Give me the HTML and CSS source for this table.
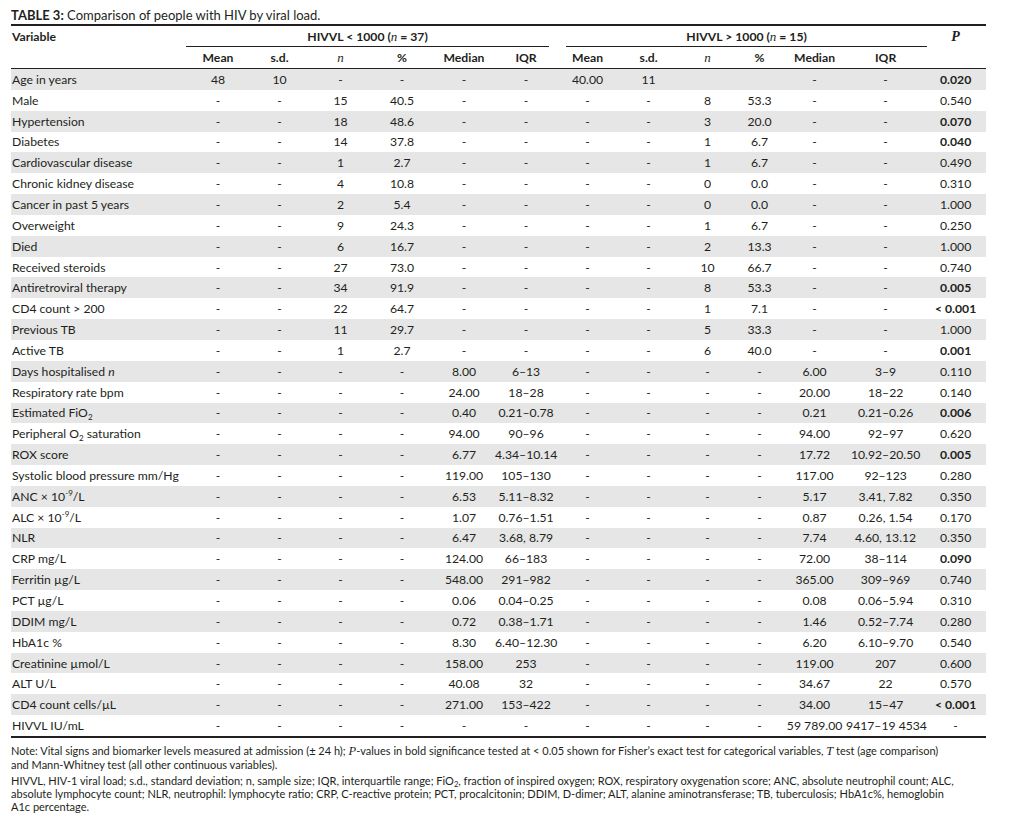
FILE: index.html
```html
<!DOCTYPE html>
<html>
<head>
<meta charset="utf-8">
<link rel="stylesheet" href="styles.css">
</head>
<body>
<div class="page">
  <div class="title"><b>TABLE 3:</b> Comparison of people with HIV by viral load.</div>
  <table class="data">
    <colgroup>
      <col class="c-var"><col class="c62"><col class="c61"><col class="c61"><col class="c62"><col class="c62"><col class="c62"><col class="c61"><col class="c61"><col class="c57"><col class="c47"><col class="c63"><col class="c79"><col class="c61">
    </colgroup>
    <thead>
      <tr>
        <th rowspan="2" class="h-var"><div class="h1">Variable</div></th>
        <th colspan="6" class="grp"><div class="gl gl-a">HIVVL &lt; 1000 (<i class="sn">n</i> = 37)</div></th>
        <th colspan="6" class="grp"><div class="gl gl-b">HIVVL &gt; 1000 (<i class="sn">n</i> = 15)</div></th>
        <th rowspan="2" class="h-p"><div class="h1"><i class="sp">P</i></div></th>
      </tr>
      <tr class="h2">
        <th>Mean</th><th>s.d.</th><th><i class="sn">n</i></th><th>%</th><th>Median</th><th>IQR</th>
        <th>Mean</th><th>s.d.</th><th><i class="sn">n</i></th><th>%</th><th>Median</th><th>IQR</th>
      </tr>
    </thead>
    <tbody>
      <tr><td>Age in years</td><td>48</td><td>10</td><td>-</td><td>-</td><td>-</td><td>-</td><td>40.00</td><td>11</td><td></td><td></td><td>-</td><td>-</td><td class="b">0.020</td></tr>
      <tr><td>Male</td><td>-</td><td>-</td><td>15</td><td>40.5</td><td>-</td><td>-</td><td>-</td><td>-</td><td>8</td><td>53.3</td><td>-</td><td>-</td><td>0.540</td></tr>
      <tr><td>Hypertension</td><td>-</td><td>-</td><td>18</td><td>48.6</td><td>-</td><td>-</td><td>-</td><td>-</td><td>3</td><td>20.0</td><td>-</td><td>-</td><td class="b">0.070</td></tr>
      <tr><td>Diabetes</td><td>-</td><td>-</td><td>14</td><td>37.8</td><td>-</td><td>-</td><td>-</td><td>-</td><td>1</td><td>6.7</td><td>-</td><td>-</td><td class="b">0.040</td></tr>
      <tr><td>Cardiovascular disease</td><td>-</td><td>-</td><td>1</td><td>2.7</td><td>-</td><td>-</td><td>-</td><td>-</td><td>1</td><td>6.7</td><td>-</td><td>-</td><td>0.490</td></tr>
      <tr><td>Chronic kidney disease</td><td>-</td><td>-</td><td>4</td><td>10.8</td><td>-</td><td>-</td><td>-</td><td>-</td><td>0</td><td>0.0</td><td>-</td><td>-</td><td>0.310</td></tr>
      <tr><td>Cancer in past 5 years</td><td>-</td><td>-</td><td>2</td><td>5.4</td><td>-</td><td>-</td><td>-</td><td>-</td><td>0</td><td>0.0</td><td>-</td><td>-</td><td>1.000</td></tr>
      <tr><td>Overweight</td><td>-</td><td>-</td><td>9</td><td>24.3</td><td>-</td><td>-</td><td>-</td><td>-</td><td>1</td><td>6.7</td><td>-</td><td>-</td><td>0.250</td></tr>
      <tr><td>Died</td><td>-</td><td>-</td><td>6</td><td>16.7</td><td>-</td><td>-</td><td>-</td><td>-</td><td>2</td><td>13.3</td><td>-</td><td>-</td><td>1.000</td></tr>
      <tr><td>Received steroids</td><td>-</td><td>-</td><td>27</td><td>73.0</td><td>-</td><td>-</td><td>-</td><td>-</td><td>10</td><td>66.7</td><td>-</td><td>-</td><td>0.740</td></tr>
      <tr><td>Antiretroviral therapy</td><td>-</td><td>-</td><td>34</td><td>91.9</td><td>-</td><td>-</td><td>-</td><td>-</td><td>8</td><td>53.3</td><td>-</td><td>-</td><td class="b">0.005</td></tr>
      <tr><td>CD4 count &gt; 200</td><td>-</td><td>-</td><td>22</td><td>64.7</td><td>-</td><td>-</td><td>-</td><td>-</td><td>1</td><td>7.1</td><td>-</td><td>-</td><td class="b">&lt; 0.001</td></tr>
      <tr><td>Previous TB</td><td>-</td><td>-</td><td>11</td><td>29.7</td><td>-</td><td>-</td><td>-</td><td>-</td><td>5</td><td>33.3</td><td>-</td><td>-</td><td>1.000</td></tr>
      <tr><td>Active TB</td><td>-</td><td>-</td><td>1</td><td>2.7</td><td>-</td><td>-</td><td>-</td><td>-</td><td>6</td><td>40.0</td><td>-</td><td>-</td><td class="b">0.001</td></tr>
      <tr><td>Days hospitalised <i>n</i></td><td>-</td><td>-</td><td>-</td><td>-</td><td>8.00</td><td>6–13</td><td>-</td><td>-</td><td>-</td><td>-</td><td>6.00</td><td>3–9</td><td>0.110</td></tr>
      <tr><td>Respiratory rate bpm</td><td>-</td><td>-</td><td>-</td><td>-</td><td>24.00</td><td>18–28</td><td>-</td><td>-</td><td>-</td><td>-</td><td>20.00</td><td>18–22</td><td>0.140</td></tr>
      <tr><td>Estimated FiO<sub>2</sub></td><td>-</td><td>-</td><td>-</td><td>-</td><td>0.40</td><td>0.21–0.78</td><td>-</td><td>-</td><td>-</td><td>-</td><td>0.21</td><td>0.21–0.26</td><td class="b">0.006</td></tr>
      <tr><td>Peripheral O<sub>2</sub> saturation</td><td>-</td><td>-</td><td>-</td><td>-</td><td>94.00</td><td>90–96</td><td>-</td><td>-</td><td>-</td><td>-</td><td>94.00</td><td>92–97</td><td>0.620</td></tr>
      <tr><td>ROX score</td><td>-</td><td>-</td><td>-</td><td>-</td><td>6.77</td><td>4.34–10.14</td><td>-</td><td>-</td><td>-</td><td>-</td><td>17.72</td><td>10.92–20.50</td><td class="b">0.005</td></tr>
      <tr><td>Systolic blood pressure mm/Hg</td><td>-</td><td>-</td><td>-</td><td>-</td><td>119.00</td><td>105–130</td><td>-</td><td>-</td><td>-</td><td>-</td><td>117.00</td><td>92–123</td><td>0.280</td></tr>
      <tr><td>ANC × 10<sup>-9</sup>/L</td><td>-</td><td>-</td><td>-</td><td>-</td><td>6.53</td><td>5.11–8.32</td><td>-</td><td>-</td><td>-</td><td>-</td><td>5.17</td><td>3.41, 7.82</td><td>0.350</td></tr>
      <tr><td>ALC × 10<sup>-9</sup>/L</td><td>-</td><td>-</td><td>-</td><td>-</td><td>1.07</td><td>0.76–1.51</td><td>-</td><td>-</td><td>-</td><td>-</td><td>0.87</td><td>0.26, 1.54</td><td>0.170</td></tr>
      <tr><td>NLR</td><td>-</td><td>-</td><td>-</td><td>-</td><td>6.47</td><td>3.68, 8.79</td><td>-</td><td>-</td><td>-</td><td>-</td><td>7.74</td><td>4.60, 13.12</td><td>0.350</td></tr>
      <tr><td>CRP mg/L</td><td>-</td><td>-</td><td>-</td><td>-</td><td>124.00</td><td>66–183</td><td>-</td><td>-</td><td>-</td><td>-</td><td>72.00</td><td>38–114</td><td class="b">0.090</td></tr>
      <tr><td>Ferritin µg/L</td><td>-</td><td>-</td><td>-</td><td>-</td><td>548.00</td><td>291–982</td><td>-</td><td>-</td><td>-</td><td>-</td><td>365.00</td><td>309–969</td><td>0.740</td></tr>
      <tr><td>PCT µg/L</td><td>-</td><td>-</td><td>-</td><td>-</td><td>0.06</td><td>0.04–0.25</td><td>-</td><td>-</td><td>-</td><td>-</td><td>0.08</td><td>0.06–5.94</td><td>0.310</td></tr>
      <tr><td>DDIM mg/L</td><td>-</td><td>-</td><td>-</td><td>-</td><td>0.72</td><td>0.38–1.71</td><td>-</td><td>-</td><td>-</td><td>-</td><td>1.46</td><td>0.52–7.74</td><td>0.280</td></tr>
      <tr><td>HbA1c %</td><td>-</td><td>-</td><td>-</td><td>-</td><td>8.30</td><td>6.40–12.30</td><td>-</td><td>-</td><td>-</td><td>-</td><td>6.20</td><td>6.10–9.70</td><td>0.540</td></tr>
      <tr><td>Creatinine µmol/L</td><td>-</td><td>-</td><td>-</td><td>-</td><td>158.00</td><td>253</td><td>-</td><td>-</td><td>-</td><td>-</td><td>119.00</td><td>207</td><td>0.600</td></tr>
      <tr><td>ALT U/L</td><td>-</td><td>-</td><td>-</td><td>-</td><td>40.08</td><td>32</td><td>-</td><td>-</td><td>-</td><td>-</td><td>34.67</td><td>22</td><td>0.570</td></tr>
      <tr><td>CD4 count cells/µL</td><td>-</td><td>-</td><td>-</td><td>-</td><td>271.00</td><td>153–422</td><td>-</td><td>-</td><td>-</td><td>-</td><td>34.00</td><td>15–47</td><td class="b">&lt; 0.001</td></tr>
      <tr><td>HIVVL IU/mL</td><td>-</td><td>-</td><td>-</td><td>-</td><td>-</td><td>-</td><td>-</td><td>-</td><td>-</td><td>-</td><td>59 789.00</td><td>9417–19 4534</td><td>-</td></tr>
    </tbody>
  </table>
  <p class="note">Note: Vital signs and biomarker levels measured at admission (± 24 h); <i class="sp2">P</i>-values in bold significance tested at &lt; 0.05 shown for Fisher’s exact test for categorical variables, <i class="sp2">T</i> test (age comparison)<br>and Mann-Whitney test (all other continuous variables).</p>
  <p class="note">HIVVL, HIV-1 viral load; s.d., standard deviation; n, sample size; IQR, interquartile range; FiO<sub class="nsub">2</sub>, fraction of inspired oxygen; ROX, respiratory oxygenation score; ANC, absolute neutrophil count; ALC,<br>absolute lymphocyte count; NLR, neutrophil: lymphocyte ratio; CRP, C-reactive protein; PCT, procalcitonin; DDIM, D-dimer; ALT, alanine aminotransferase; TB, tuberculosis; HbA1c%, hemoglobin<br>A1c percentage.</p>
</div>
</body>
</html>
```

FILE: styles.css
```css
body {
  margin: 0;
  background: #ffffff;
  color: #231f20;
  font-family: Lato, "Liberation Sans", sans-serif;
}

.page {
  width: 975px;
  padding-left: 11px;
}

.title {
  padding-top: 6px;
  height: 18px;
  line-height: 18px;
  font-size: 13px;
  white-space: nowrap;
}

.data {
  width: 975px;
  table-layout: fixed;
  border-collapse: separate;
  border-spacing: 0;
  border-top: 2px solid #231f20;
  border-bottom: 2px solid #231f20;
  font-size: 12.2px;
}

.c-var { width: 176px; }
.c62 { width: 62px; }
.c61 { width: 61px; }
.c57 { width: 57px; }
.c47 { width: 47px; }
.c63 { width: 63px; }
.c79 { width: 79px; }

.data th {
  padding: 0;
  font-weight: 700;
  text-align: center;
  vertical-align: top;
}

.data th.h-var {
  text-align: left;
  padding-left: 1px;
  border-bottom: 1px solid #231f20;
}

.data th.h-p {
  border-bottom: 1px solid #231f20;
}

.h1 {
  height: 21px;
  line-height: 22px;
}

.gl {
  height: 20px;
  line-height: 22px;
  border-bottom: 1px solid #231f20;
  white-space: nowrap;
}

.gl-a { margin: 0 8px 0 -1px; }
.gl-b { margin: 0 -2px 0 9px; }

.h2 th {
  height: 20px;
  padding-top: 1px;
  line-height: 20px;
  vertical-align: middle;
  border-bottom: 1px solid #231f20;
}

.sn {
  font-family: "Liberation Serif", serif;
  font-style: italic;
  font-weight: 400;
  font-size: 13px;
}

.sp {
  font-family: "Liberation Serif", serif;
  font-style: italic;
  font-weight: 700;
  font-size: 14px;
}

.sp2 {
  font-family: "Liberation Serif", serif;
  font-style: italic;
  font-size: 12.5px;
}

.data tbody tr {
  height: 20.85px;
}

.data tbody tr:nth-child(odd) td {
  background: #e6e6e6;
}

.data td {
  padding: 1px 0 0;
  text-align: center;
  vertical-align: middle;
  white-space: nowrap;
  line-height: 14px;
}

.data td:first-child {
  text-align: left;
  padding-left: 1px;
}

.data td.b {
  font-weight: 700;
}

sub, sup {
  font-size: 8px;
  line-height: 0;
}

.nsub {
  vertical-align: -2px;
  font-size: 7.5px;
}

.note {
  margin: 0;
  font-size: 11px;
  line-height: 13.1px;
  white-space: nowrap;
}

.note:first-of-type {
  margin-top: 6px;
}

.note + .note {
  margin-top: 3px;
}
```
